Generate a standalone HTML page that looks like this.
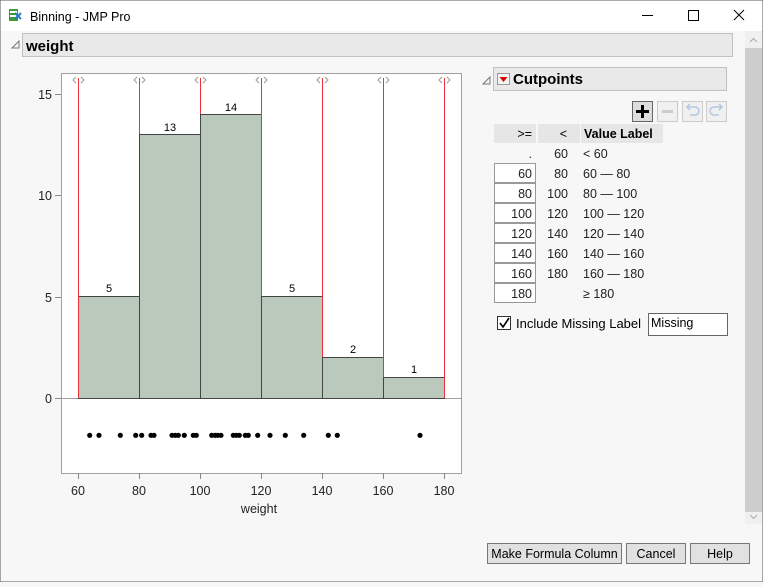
<!DOCTYPE html>
<html><head><style>
body{margin:0;width:763px;height:582px;overflow:hidden;background:#f7f7f7;font-family:"Liberation Sans",sans-serif;}
</style></head><body>
<svg width="763" height="582" xmlns="http://www.w3.org/2000/svg" font-family="Liberation Sans, sans-serif">
<rect x="0" y="0" width="763" height="31" fill="#fff"/>
<rect x="0" y="0" width="763" height="582" fill="none" stroke="#555" stroke-width="1"/>
<rect x="9" y="9" width="9" height="12" fill="#3a9c3a"/>
<rect x="10" y="11" width="7" height="2" fill="#fff"/><rect x="10" y="15" width="7" height="2" fill="#fff"/>
<path d="M15 13 L21 19 M21 13 L15 19" stroke="#2a7ac8" stroke-width="2"/>
<text x="30" y="21" font-size="12.5" fill="#000">Binning - JMP Pro</text>
<line x1="642" y1="15.5" x2="653" y2="15.5" stroke="#000"/>
<rect x="688.5" y="10.5" width="10" height="10" fill="none" stroke="#000"/>
<path d="M734 10 L744 20 M744 10 L734 20" stroke="#000"/>
<rect x="745" y="31" width="17" height="493" fill="#f0f0f0"/>
<rect x="745" y="48" width="17" height="464" fill="#cdcdcd"/>
<path d="M750 42 L753.5 38.5 L757 42" stroke="#aaa" fill="none"/>
<path d="M750 515 L753.5 518.5 L757 515" stroke="#aaa" fill="none"/>
<path d="M12 48 L19 41 L19 48 Z" fill="none" stroke="#777"/>
<rect x="22.5" y="33.5" width="710" height="23" fill="#e9e9e9" stroke="#c0c0c0"/>
<text x="26" y="51" font-size="15" font-weight="bold">weight</text>
<rect x="61.5" y="73.5" width="400" height="400" fill="#fff" stroke="#a0a0a0"/>
<line x1="61" y1="398.5" x2="461" y2="398.5" stroke="#a0a0a0"/>
<g fill="#bac9bb" stroke="#444">
<rect x="78.5" y="296.5" width="61" height="102"/>
<rect x="139.5" y="134.5" width="61" height="264"/>
<rect x="200.5" y="114.5" width="61" height="284"/>
<rect x="261.5" y="296.5" width="61" height="102"/>
<rect x="322.5" y="357.5" width="61" height="41"/>
<rect x="383.5" y="377.5" width="61" height="21"/>
</g>
<g stroke="#e8323c">
<line x1="78.5" y1="78" x2="78.5" y2="398"/><line x1="139.5" y1="78" x2="139.5" y2="134"/>
<line x1="200.5" y1="78" x2="200.5" y2="114"/><line x1="261.5" y1="78" x2="261.5" y2="296"/>
<line x1="322.5" y1="78" x2="322.5" y2="357"/><line x1="383.5" y1="78" x2="383.5" y2="377"/>
<line x1="444.5" y1="78" x2="444.5" y2="398"/>
</g>
<g stroke="#999" fill="none">
<path d="M76 77 L73 80 L76 83 M81 77 L84 80 L81 83"/>
<path d="M137 77 L134 80 L137 83 M142 77 L145 80 L142 83"/>
<path d="M198 77 L195 80 L198 83 M203 77 L206 80 L203 83"/>
<path d="M259 77 L256 80 L259 83 M264 77 L267 80 L264 83"/>
<path d="M320 77 L317 80 L320 83 M325 77 L328 80 L325 83"/>
<path d="M381 77 L378 80 L381 83 M386 77 L389 80 L386 83"/>
<path d="M442 77 L439 80 L442 83 M447 77 L450 80 L447 83"/>
</g>
<g font-size="11" text-anchor="middle">
<text x="109" y="292">5</text><text x="170" y="131">13</text><text x="231" y="111">14</text>
<text x="292" y="292">5</text><text x="353" y="353">2</text><text x="414" y="373">1</text>
</g>
<g font-size="12.5" text-anchor="end" fill="#222">
<text x="52" y="99">15</text><text x="52" y="200">10</text><text x="52" y="302">5</text><text x="52" y="403">0</text>
</g>
<g stroke="#888"><line x1="55" y1="94.5" x2="61" y2="94.5"/><line x1="55" y1="195.5" x2="61" y2="195.5"/><line x1="55" y1="297.5" x2="61" y2="297.5"/><line x1="55" y1="398.5" x2="61" y2="398.5"/>
<line x1="78.5" y1="473" x2="78.5" y2="479"/><line x1="139.5" y1="473" x2="139.5" y2="479"/><line x1="200.5" y1="473" x2="200.5" y2="479"/><line x1="261.5" y1="473" x2="261.5" y2="479"/><line x1="322.5" y1="473" x2="322.5" y2="479"/><line x1="383.5" y1="473" x2="383.5" y2="479"/><line x1="444.5" y1="473" x2="444.5" y2="479"/></g>
<g font-size="12.5" text-anchor="middle" fill="#222">
<text x="78" y="495">60</text><text x="139" y="495">80</text><text x="200" y="495">100</text><text x="261" y="495">120</text><text x="322" y="495">140</text><text x="383" y="495">160</text><text x="444" y="495">180</text>
<text x="259" y="513">weight</text>
</g>
<g fill="#000">
<circle cx="89.7" cy="435.3" r="2.6"/><circle cx="99" cy="435.3" r="2.6"/><circle cx="120.3" cy="435.3" r="2.6"/><circle cx="135.7" cy="435.3" r="2.6"/><circle cx="141.7" cy="435.3" r="2.6"/><circle cx="151" cy="435.3" r="2.6"/><circle cx="154" cy="435.3" r="2.6"/><circle cx="172" cy="435.3" r="2.6"/><circle cx="175.3" cy="435.3" r="2.6"/><circle cx="178.3" cy="435.3" r="2.6"/><circle cx="184.3" cy="435.3" r="2.6"/><circle cx="193.3" cy="435.3" r="2.6"/><circle cx="196.3" cy="435.3" r="2.6"/><circle cx="211.7" cy="435.3" r="2.6"/><circle cx="215" cy="435.3" r="2.6"/><circle cx="217.7" cy="435.3" r="2.6"/><circle cx="221" cy="435.3" r="2.6"/><circle cx="233.3" cy="435.3" r="2.6"/><circle cx="236.3" cy="435.3" r="2.6"/><circle cx="239.3" cy="435.3" r="2.6"/><circle cx="245.3" cy="435.3" r="2.6"/><circle cx="248.3" cy="435.3" r="2.6"/><circle cx="257.7" cy="435.3" r="2.6"/><circle cx="270" cy="435.3" r="2.6"/><circle cx="285.3" cy="435.3" r="2.6"/><circle cx="303.7" cy="435.3" r="2.6"/><circle cx="328.3" cy="435.3" r="2.6"/><circle cx="337.3" cy="435.3" r="2.6"/><circle cx="420" cy="435.3" r="2.6"/>
</g>
<path d="M483 84 L490 77 L490 84 Z" fill="none" stroke="#777"/>
<rect x="493.5" y="67.5" width="233" height="23" fill="#e9e9e9" stroke="#c0c0c0"/>
<rect x="497.5" y="73.5" width="12" height="11" fill="#f4f4f4" stroke="#999"/>
<path d="M499.5 77 L507.5 77 L503.5 82 Z" fill="#d00"/>
<text x="513" y="84" font-size="15" font-weight="bold">Cutpoints</text>
<rect x="632.5" y="101.5" width="20" height="20" fill="#ddd" stroke="#666"/>
<path d="M642.5 105 V118 M636 111.5 H649" stroke="#000" stroke-width="3"/>
<rect x="657.5" y="101.5" width="20" height="20" fill="#f0f0f0" stroke="#ccc"/>
<path d="M662 111.5 H673" stroke="#ccc" stroke-width="3"/>
<rect x="682.5" y="101.5" width="20" height="20" fill="#f0f0f0" stroke="#ccc"/>
<path d="M688 107 H695 A4 4 0 0 1 695 115 H690 M690 104 L687 107 L690 110" stroke="#b0c8e0" fill="none" stroke-width="1.5"/>
<rect x="706.5" y="101.5" width="20" height="20" fill="#f0f0f0" stroke="#ccc"/>
<path d="M721 107 H714 A4 4 0 0 0 714 115 H719 M719 104 L722 107 L719 110" stroke="#b0c8e0" fill="none" stroke-width="1.5"/>
<rect x="494" y="124" width="42" height="19" fill="#e6e6e6"/>
<rect x="538" y="124" width="42" height="19" fill="#e6e6e6"/>
<rect x="581" y="124" width="82" height="19" fill="#e6e6e6"/>
<g font-size="12.5" fill="#000">
<text x="532" y="138" text-anchor="end">&gt;=</text>
<text x="567" y="138" text-anchor="end">&lt;</text>
<text x="584" y="138" font-weight="bold">Value Label</text>
</g>
<g fill="#fff" stroke="#999">
<rect x="494.5" y="163.5" width="41" height="19"/><rect x="494.5" y="183.5" width="41" height="19"/><rect x="494.5" y="203.5" width="41" height="19"/><rect x="494.5" y="223.5" width="41" height="19"/><rect x="494.5" y="243.5" width="41" height="19"/><rect x="494.5" y="263.5" width="41" height="19"/><rect x="494.5" y="283.5" width="41" height="19"/>
</g>
<g font-size="12.5" fill="#222">
<g text-anchor="end">
<text x="532" y="158">.</text><text x="532" y="178">60</text><text x="532" y="198">80</text><text x="532" y="218">100</text><text x="532" y="238">120</text><text x="532" y="258">140</text><text x="532" y="278">160</text><text x="532" y="298">180</text>
<text x="568" y="158">60</text><text x="568" y="178">80</text><text x="568" y="198">100</text><text x="568" y="218">120</text><text x="568" y="238">140</text><text x="568" y="258">160</text><text x="568" y="278">180</text>
</g>
<text x="583" y="158">&lt; 60</text><text x="583" y="178">60 — 80</text><text x="583" y="198">80 — 100</text><text x="583" y="218">100 — 120</text><text x="583" y="238">120 — 140</text><text x="583" y="258">140 — 160</text><text x="583" y="278">160 — 180</text><text x="583" y="298">≥ 180</text>
</g>
<rect x="497.5" y="316.5" width="13" height="13" fill="#fff" stroke="#333"/>
<path d="M500 323 L503 327 L509 318" stroke="#000" stroke-width="1.6" fill="none"/>
<text x="516" y="328" font-size="13" fill="#000">Include Missing Label</text>
<rect x="648.5" y="313.5" width="79" height="22" fill="#fff" stroke="#666"/>
<text x="651" y="327" font-size="12.5">Missing</text>
<g fill="#e1e1e1" stroke="#777">
<rect x="487.5" y="543.5" width="134" height="20"/><rect x="626.5" y="543.5" width="59" height="20"/><rect x="690.5" y="543.5" width="59" height="20"/>
</g>
<g font-size="12.5" text-anchor="middle" fill="#000">
<text x="554.5" y="558">Make Formula Column</text><text x="656" y="558">Cancel</text><text x="720" y="558">Help</text>
</g>
</svg>
</body></html>
